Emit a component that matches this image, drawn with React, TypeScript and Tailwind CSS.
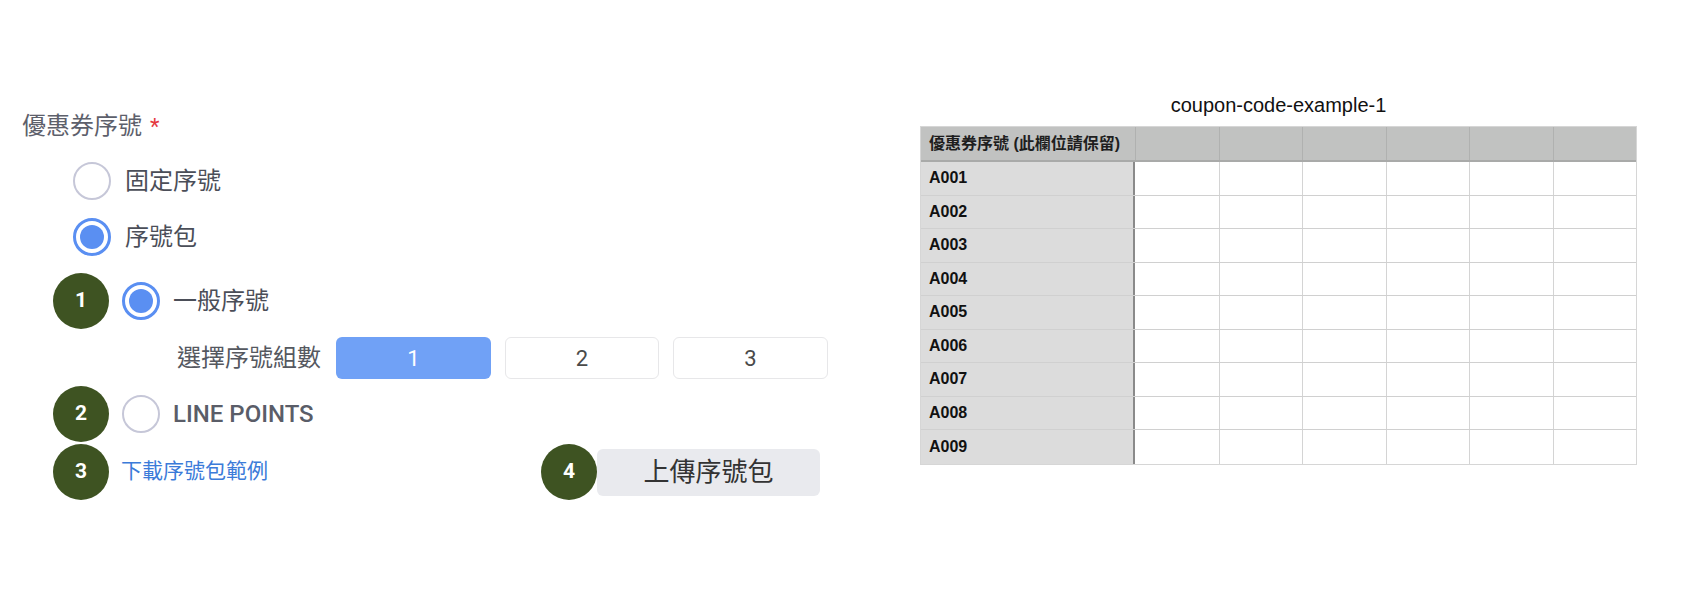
import React from "react";

const cjk = "font-['Roboto','Noto_Sans_CJK_TC',sans-serif]";
const sheet = "font-['Liberation_Sans','Noto_Sans_CJK_TC',sans-serif]";

function Radio({ checked }: { checked?: boolean }) {
  if (checked) {
    return (
      <span className="flex h-[38px] w-[38px] shrink-0 items-center justify-center rounded-full border-[3px] border-[#5a8ff2] bg-white">
        <span className="h-[24px] w-[24px] rounded-full bg-[#5a8ff2]" />
      </span>
    );
  }
  return <span className="h-[38px] w-[38px] shrink-0 rounded-full border-[2.5px] border-[#c6c7d8] bg-white" />;
}

function Badge({ n }: { n: number }) {
  return (
    <span className="flex h-[56px] w-[56px] shrink-0 items-center justify-center rounded-full bg-[#3e5322] text-[21px] font-bold text-white">
      {n}
    </span>
  );
}

const rows = ["A001", "A002", "A003", "A004", "A005", "A006", "A007", "A008", "A009"];

export default function App() {
  return (
    <div className="flex h-[614px] w-[1692px] bg-white">
      {/* Left form */}
      <div className={`w-[920px] shrink-0 pl-[22px] pt-[110px] ${cjk}`}>
        <div className="flex h-[32px] items-center text-[24px] text-[#5d606b]">
          優惠券序號<span className="ml-[8px] text-[22px] text-[#e5393f]">*</span>
        </div>

        <div className="ml-[51px] mt-[19px] flex h-[40px] items-center gap-[14px] text-[24px] text-[#4b4e58]">
          <Radio />
          固定序號
        </div>
        <div className="ml-[51px] mt-[16px] flex h-[40px] items-center gap-[14px] text-[24px] text-[#4b4e58]">
          <Radio checked />
          序號包
        </div>

        <div className="ml-[31px] mt-[16px] flex h-[56px] items-center gap-[13px] text-[24px] text-[#4b4e58]">
          <Badge n={1} />
          <Radio checked />
          一般序號
        </div>

        <div className="ml-[155px] mt-[8px] flex h-[42px] items-center text-[24px] text-[#55585f]">
          <span className="w-[159px]">選擇序號組數</span>
          <div className="flex gap-[14px]">
            <button className="h-[42px] w-[155px] rounded-[6px] bg-[#70a1f6] text-[22px] text-white">1</button>
            <button className="h-[42px] w-[154px] rounded-[6px] border border-[#e7e7e9] bg-white text-[22px] text-[#4a4a4a]">2</button>
            <button className="h-[42px] w-[155px] rounded-[6px] border border-[#e7e7e9] bg-white text-[22px] text-[#4a4a4a]">3</button>
          </div>
        </div>

        <div className="ml-[31px] mt-[7px] flex h-[56px] items-center gap-[13px] text-[24px] font-medium text-[#5a5d68]">
          <Badge n={2} />
          <Radio />
          LINE POINTS
        </div>

        <div className="ml-[31px] mt-[2px] flex h-[56px] items-center">
          <Badge n={3} />
          <span className="ml-[12px] w-[420px] text-[21px] text-[#3b7bd9]">下載序號包範例</span>
          <Badge n={4} />
          <button className="h-[47px] w-[223px] rounded-[6px] bg-[#e9eaee] text-[26px] text-[#333]">上傳序號包</button>
        </div>
      </div>

      {/* Right example sheet */}
      <div className={`w-[717px] shrink-0 pt-[93px] ${sheet}`}>
        <div className="mb-[9px] h-[24px] text-center text-[20px] leading-[24px] text-[#111]">coupon-code-example-1</div>
        <div className="border border-[#d6d6d6]">
          <div className="grid h-[35px] grid-cols-[214px_repeat(6,1fr)] border-b-2 border-[#a9aaa9] bg-[#c1c2c1]">
            <div className="flex items-center pl-[8px] text-[16px] font-bold text-[#1e1e1e]">優惠券序號 (此欄位請保留)</div>
            {[0, 1, 2, 3, 4, 5].map((i) => (
              <div key={i} className="border-l border-[#b0b1b0]" />
            ))}
          </div>
          {rows.map((r, idx) => (
            <div
              key={r}
              className={`grid h-[33.5px] grid-cols-[214px_repeat(6,1fr)] ${idx < rows.length - 1 ? "border-b border-[#d0d0d0]" : ""}`}
            >
              <div className="flex items-center border-r-2 border-[#8a8a8a] bg-[#dcdcdc] pl-[8px] text-[16px] font-bold text-[#111]">{r}</div>
              {[0, 1, 2, 3, 4, 5].map((i) => (
                <div key={i} className={i > 0 ? "border-l border-[#d4d4d4]" : ""} />
              ))}
            </div>
          ))}
        </div>
      </div>
    </div>
  );
}
